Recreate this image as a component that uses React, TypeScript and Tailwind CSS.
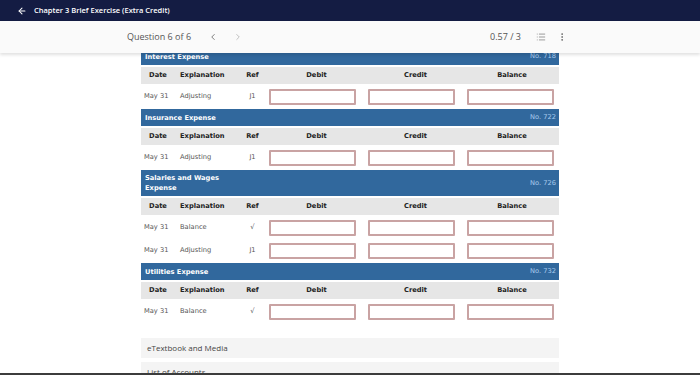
import React from "react";
import { ArrowLeft, ChevronLeft, ChevronRight, List, EllipsisVertical } from "lucide-react";

type Row = { date: string; expl: string; ref: string };
type Account = { title: React.ReactNode; no: string; tall?: boolean; rows: Row[] };

const accounts: Account[] = [
  { title: "Interest Expense", no: "No. 718", rows: [{ date: "May 31", expl: "Adjusting", ref: "J1" }] },
  { title: "Insurance Expense", no: "No. 722", rows: [{ date: "May 31", expl: "Adjusting", ref: "J1" }] },
  {
    title: (
      <>
        Salaries and Wages
        <br />
        Expense
      </>
    ),
    no: "No. 726",
    tall: true,
    rows: [
      { date: "May 31", expl: "Balance", ref: "√" },
      { date: "May 31", expl: "Adjusting", ref: "J1" },
    ],
  },
  { title: "Utilities Expense", no: "No. 732", rows: [{ date: "May 31", expl: "Balance", ref: "√" }] },
];

const grid = "grid grid-cols-[34px_63px_29px_99px_99px_94px]";

function Box() {
  return <div className="ml-[2px] w-[87px] h-[16px] border-2 border-[#c9a3a3] rounded-[1px] bg-white" />;
}

function Ledger({ a }: { a: Account }) {
  return (
    <>
      <div
        className={`flex items-center justify-between bg-[#31689d] pl-[4px] pr-[3px] ${
          a.tall ? "h-[26px]" : "h-[17px]"
        }`}
      >
        <span className="text-white font-bold text-[6.7px] leading-[10px]">{a.title}</span>
        <span className="text-[#a9cbee] text-[6.7px]">{a.no}</span>
      </div>
      <div className={`${grid} h-[17px] items-center bg-[#e6e6e6] text-[#222] font-bold text-[6.7px]`}>
        <span className="text-center">Date</span>
        <span className="pl-[5px]">Explanation</span>
        <span className="text-center">Ref</span>
        <span className="text-center">Debit</span>
        <span className="text-center">Credit</span>
        <span className="text-center">Balance</span>
      </div>
      {a.rows.map((r, i) => (
        <div key={i} className={`${grid} h-[21px] items-center text-[#555] text-[6.7px]`}>
          <span className="pl-[3px]">{r.date}</span>
          <span className="pl-[5px]">{r.expl}</span>
          <span className="text-center">{r.ref}</span>
          <Box />
          <Box />
          <Box />
        </div>
      ))}
    </>
  );
}

export default function App() {
  return (
    <div className="w-[700px] h-[375px] overflow-hidden bg-white flex flex-col font-['Open_Sans',sans-serif]">
      <header className="h-[21px] shrink-0 bg-[#141c43] flex items-center pl-[17px] gap-[7px] text-white">
        <ArrowLeft size={10} strokeWidth={2.5} />
        <span className="text-[7.5px] font-semibold">Chapter 3 Brief Exercise (Extra Credit)</span>
      </header>

      <div className="h-[32px] shrink-0 relative z-10 bg-[#fafafa] shadow-[0_2px_3px_rgba(0,0,0,0.12)] flex items-center pl-[127px] pr-[133px] text-[9px] text-[#555]">
        <span>Question 6 of 6</span>
        <ChevronLeft size={10} className="ml-[17px] text-[#666]" />
        <ChevronRight size={10} className="ml-[15px] text-[#b5b5b5]" />
        <span className="ml-auto">0.57 / 3</span>
        <List size={10} className="ml-[15px] text-[#888]" />
        <EllipsisVertical size={10} className="ml-[11px] text-[#666]" />
      </div>

      <main className="flex-1 overflow-hidden">
        <div className="-mt-[5px] ml-[141px] w-[418px] flex flex-col gap-[2px] font-['DejaVu_Sans',sans-serif]">
          {accounts.map((a, i) => (
            <Ledger key={i} a={a} />
          ))}
        </div>
        <div className="ml-[141px] w-[418px] mt-[16px] flex flex-col gap-[4px] text-[8px] text-[#444]">
          <div className="h-[20px] bg-[#f4f4f4] flex items-center pl-[6px]">eTextbook and Media</div>
          <div className="h-[20px] bg-[#f4f4f4] flex items-center pl-[6px]">List of Accounts</div>
        </div>
      </main>

      <div className="h-[2px] shrink-0 bg-[#3c3c3c]" />
    </div>
  );
}
